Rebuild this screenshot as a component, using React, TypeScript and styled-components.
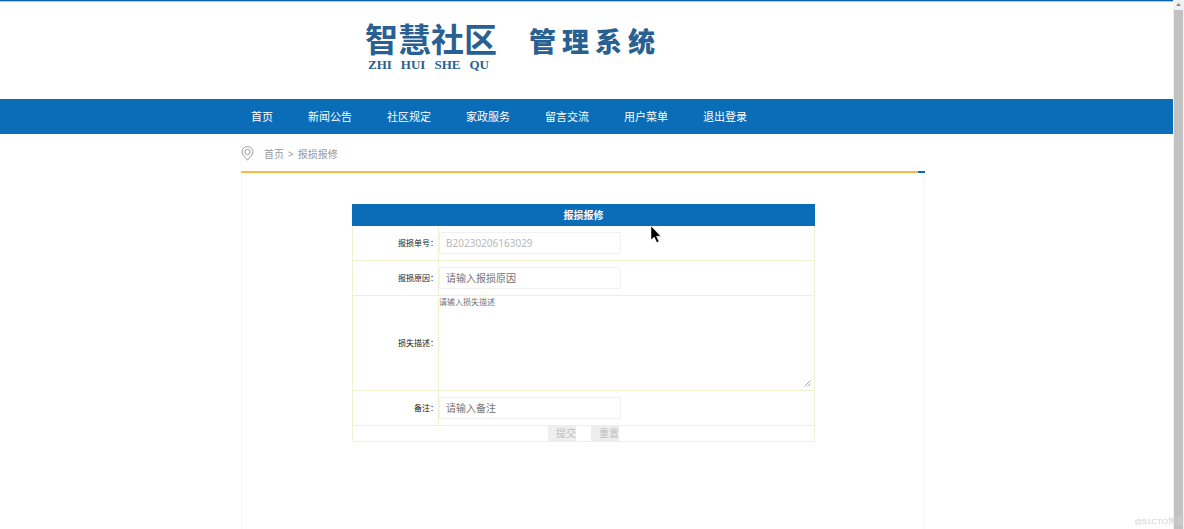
import React from "react";
import styled, { createGlobalStyle } from "styled-components";

const blue = "#0b6cb8";
const rule = "#f1f1cf";

const GlobalStyle = createGlobalStyle`
  *, *::before, *::after { box-sizing: border-box; }
  html, body { margin: 0; background: #fff; }
  body {
    font-family: "Noto Sans", "Noto Sans CJK SC", sans-serif;
    font-size: 10px;
    line-height: 14px;
    color: #222;
    overflow: hidden;
  }
  a { color: inherit; text-decoration: none; }
  button, input, textarea { font: inherit; margin: 0; }
`;

const Shell = styled.div`
  display: flex;
  height: 100vh;
`;

const Page = styled.div`
  flex: 1;
  min-width: 0;
  display: flex;
  flex-direction: column;
  border-top: 1px solid #0a62b4;
  box-shadow: inset 0 1px 0 #a9cbe8;
`;

const Container = styled.div`
  width: 100%;
  max-width: 691px;
  margin: 0 auto;
  padding-right: 7px;
`;

const Header = styled.header`
  padding: 18px 0 26px;
`;

const Logo = styled.a`
  display: flex;
  align-items: flex-start;
  gap: 32px;
  padding-left: 124px;
  color: #2a5f92;
`;

const LogoMark = styled.span`
  display: flex;
  flex-direction: column;
`;

const LogoName = styled.span`
  font: 700 33px/38px "Noto Sans CJK SC", sans-serif;
`;

const LogoPinyin = styled.span`
  padding-left: 3px;
  font: 700 13px/16px "Liberation Serif", serif;
  display: flex;
  gap: 9px;
`;

const LogoSystem = styled.span`
  display: flex;
  gap: 6px;
  font: 900 27px/44px "Noto Sans CJK SC", sans-serif;
`;

const NavBar = styled.nav`
  background: ${blue};
`;

const NavList = styled.ul`
  display: flex;
  gap: 35px;
  margin: 0;
  padding: 0 0 0 10px;
  list-style: none;
  font-size: 11px;
  line-height: 35px;
  color: #fff;
  white-space: nowrap;
`;

const Breadcrumb = styled.nav`
  display: flex;
  align-items: center;
  gap: 4px;
  height: 37px;
  padding-top: 2px;
  color: #999;

  svg { margin-right: 6px; }
`;

const Main = styled(Container).attrs({ as: "main" })`
  flex: 1;
  display: flex;
  flex-direction: column;
`;

const Accent = styled.div`
  display: flex;
  height: 2px;
  background: #ffb743;

  &::after {
    content: "";
    width: 7px;
    margin-left: auto;
    background: ${blue};
  }
`;

const Panel = styled.section`
  position: relative;
  flex: 1;
  padding: 31px 109px 0 110px;
  border: solid #f6f6f6;
  border-width: 0 1px;
`;

const FormTable = styled.table`
  width: 100%;
  table-layout: fixed;
  border-collapse: collapse;
`;

const TitleCell = styled.th`
  height: 21px;
  padding: 0;
  background: ${blue};
  border: 1px solid ${blue};
  color: #fff;
  font-weight: 700;
`;

const LabelCell = styled.th`
  width: 86px;
  padding: 0;
  border: 1px solid ${rule};
  text-align: right;
  font-size: 8px;
  font-weight: 400;
  white-space: nowrap;
`;

const FieldCell = styled.td<{ $flush?: boolean }>`
  position: relative;
  padding: ${(p) => (p.$flush ? "0" : "6px 0")};
  border: 1px solid ${rule};
`;

const TextInput = styled.input`
  display: block;
  width: 182px;
  height: 22px;
  padding: 0 6px;
  border: 1px solid #f1f1f1;
  border-radius: 2px;
  background: #fff;
  color: #757575;
  outline: 0;

  &::placeholder { color: #757575; opacity: 1; }
  &:disabled { color: #b8b8b8; }
`;

const TextArea = styled.textarea`
  display: block;
  width: 100%;
  height: 94px;
  padding: 0;
  border: 0;
  resize: none;
  outline: 0;
  background: transparent;
  font-size: 8px;
  line-height: 12px;

  &::placeholder { color: #757575; opacity: 1; }
`;

const Grip = styled.svg`
  position: absolute;
  right: 3px;
  bottom: 3px;
`;

const ActionCell = styled.td`
  padding: 0;
  border: 1px solid ${rule};
`;

const Actions = styled.div`
  display: flex;
  justify-content: center;
  gap: 15px;
`;

const ActionButton = styled.button`
  width: 28px;
  height: 15px;
  padding: 0 0 0 8px;
  border: 0;
  background: #eee;
  color: #c0c0c0;
  line-height: 15px;
  white-space: nowrap;
  overflow: hidden;
`;

const Pointer = styled.svg`
  position: absolute;
  top: 52px;
  left: 408px;
`;

const ScrollTrack = styled.div`
  width: 11px;
  display: flex;
  flex-direction: column;
  align-items: center;
  background: #f1f1f1;

  svg { flex: none; }
`;

const ScrollThumb = styled.div`
  flex: 1;
  width: 9px;
  background: #c1c1c1;
`;

const Watermark = styled.span`
  position: fixed;
  right: 0;
  bottom: 0;
  font-family: "Liberation Sans", "Noto Sans CJK SC", sans-serif;
  font-size: 8px;
  color: #d2d2d2;
`;

const navItems = ["首页", "新闻公告", "社区规定", "家政服务", "留言交流", "用户菜单", "退出登录"];

export default function App() {
  return (
    <>
      <GlobalStyle />
      <Shell>
        <Page>
          <Header>
            <Container>
              <Logo href="#">
                <LogoMark>
                  <LogoName>智慧社区</LogoName>
                  <LogoPinyin>
                    <span>ZHI</span>
                    <span>HUI</span>
                    <span>SHE</span>
                    <span>QU</span>
                  </LogoPinyin>
                </LogoMark>
                <LogoSystem>
                  <span>管</span>
                  <span>理</span>
                  <span>系</span>
                  <span>统</span>
                </LogoSystem>
              </Logo>
            </Container>
          </Header>
          <NavBar>
            <Container>
              <NavList>
                {navItems.map((item) => (
                  <li key={item}>
                    <a href="#">{item}</a>
                  </li>
                ))}
              </NavList>
            </Container>
          </NavBar>
          <Main>
            <Breadcrumb>
              <svg width="13" height="15" viewBox="0 0 13 15" fill="none" stroke="#999" aria-hidden="true">
                <path d="M6.5 14.2C5 12 1 9 1 5.9a5.5 5.3 0 0 1 11 0C12 9 8 12 6.5 14.2Z" />
                <circle cx="6.5" cy="6" r="2.6" />
              </svg>
              <a href="#">首页</a>
              <span>&gt;</span>
              <a href="#">报损报修</a>
            </Breadcrumb>
            <Accent />
            <Panel>
              <form>
                <FormTable>
                  <colgroup>
                    <col style={{ width: 86 }} />
                    <col />
                  </colgroup>
                  <thead>
                    <tr>
                      <TitleCell colSpan={2}>报损报修</TitleCell>
                    </tr>
                  </thead>
                  <tbody>
                    <tr>
                      <LabelCell scope="row">
                        <label htmlFor="number">报损单号：</label>
                      </LabelCell>
                      <FieldCell>
                        <TextInput id="number" defaultValue="B20230206163029" disabled />
                      </FieldCell>
                    </tr>
                    <tr>
                      <LabelCell scope="row">
                        <label htmlFor="reason">报损原因：</label>
                      </LabelCell>
                      <FieldCell>
                        <TextInput id="reason" placeholder="请输入报损原因" />
                      </FieldCell>
                    </tr>
                    <tr>
                      <LabelCell scope="row">
                        <label htmlFor="detail">损失描述：</label>
                      </LabelCell>
                      <FieldCell $flush>
                        <TextArea id="detail" placeholder="请输入损失描述" />
                        <Grip width="7" height="7" viewBox="0 0 7 7" stroke="#aaa" aria-hidden="true">
                          <path d="M0.5 6.5L6.5 0.5M3.5 6.5L6.5 3.5" />
                        </Grip>
                      </FieldCell>
                    </tr>
                    <tr>
                      <LabelCell scope="row">
                        <label htmlFor="remark">备注：</label>
                      </LabelCell>
                      <FieldCell>
                        <TextInput id="remark" placeholder="请输入备注" />
                      </FieldCell>
                    </tr>
                    <tr>
                      <ActionCell colSpan={2}>
                        <Actions>
                          <ActionButton type="submit">提交</ActionButton>
                          <ActionButton type="reset">重置</ActionButton>
                        </Actions>
                      </ActionCell>
                    </tr>
                  </tbody>
                </FormTable>
              </form>
              <Pointer width="12" height="19" viewBox="0 0 12 19" aria-hidden="true">
                <path d="M1 1v14l3.2-3 2.6 5.6 2.2-1-2.5-5.4h4.3Z" fill="#000" stroke="#fff" strokeWidth="0.5" />
              </Pointer>
            </Panel>
          </Main>
        </Page>
        <ScrollTrack>
          <svg width="9" height="10" viewBox="0 0 9 10" aria-hidden="true">
            <path d="M4.5 3L7 6H2Z" fill="#8a8a8a" />
          </svg>
          <ScrollThumb />
        </ScrollTrack>
      </Shell>
      <Watermark>@51CTO博客</Watermark>
    </>
  );
}
